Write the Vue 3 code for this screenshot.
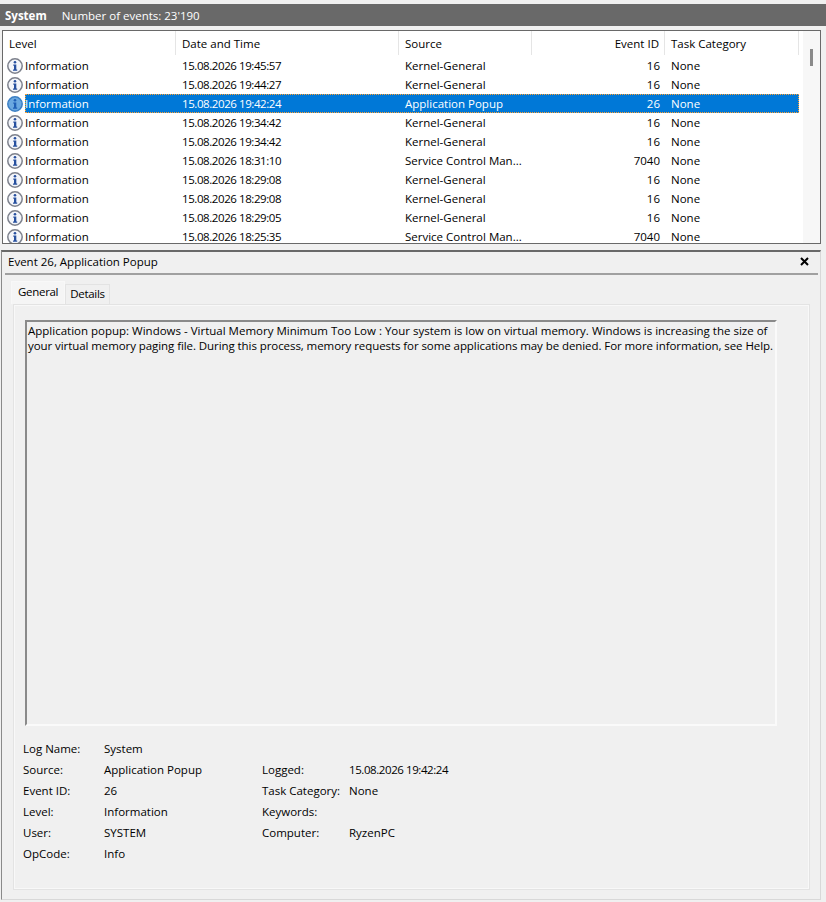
<template>
  <div class="viewer">
    <div class="log-bar">
      <strong>System</strong>
      <span>Number of events: 23'190</span>
    </div>

    <div class="list-panel">
      <div class="list-main">
        <div class="list-head">
          <div v-for="col in columns" :key="col.name" class="head-cell" :class="col.cls">{{ col.name }}</div>
        </div>
        <div class="rows">
          <div v-for="(ev, i) in events" :key="i" class="row" :class="{ selected: i === 2 }">
            <div class="cell level">
              <svg class="info-icon" width="16" height="16" viewBox="0 0 16 16">
                <circle cx="8" cy="8" r="7.2" :fill="i === 2 ? '#6aa8e0' : '#f3f5fa'" :stroke="i === 2 ? '#3b7fc4' : '#7d818c'" stroke-width="1.5" />
                <circle cx="8" cy="4.2" r="1.3" :fill="i === 2 ? '#1f5fb5' : '#27509f'" />
                <path d="M6.3 6.5h3v5h.9v1.3H6v-1.3h1V7.8h-.7z" :fill="i === 2 ? '#1f5fb5' : '#27509f'" />
              </svg>
              <span class="level-text">Information</span>
            </div>
            <div class="cell date">{{ ev.date }}</div>
            <div class="cell source">{{ ev.source }}</div>
            <div class="cell event-id">{{ ev.id }}</div>
            <div class="cell task">None</div>
          </div>
        </div>
      </div>
      <div class="scroll-track"><div class="scroll-thumb"></div></div>
    </div>

    <div class="detail-panel">
      <div class="detail-title">
        <span>Event 26, Application Popup</span>
        <svg class="close-icon" width="9" height="9" viewBox="0 0 9 9">
          <path d="M1 1l7 7M8 1l-7 7" stroke="#000" stroke-width="2" fill="none" />
        </svg>
      </div>

      <div class="tabs">
        <div class="tab active">General</div>
        <div class="tab">Details</div>
      </div>

      <div class="tab-body">
        <div class="message">
          <div class="line-one">Application popup: Windows - Virtual Memory Minimum Too Low : Your system is low on virtual memory. Windows is increasing the size of</div>
          <div class="line-two">your virtual memory paging file. During this process, memory requests for some applications may be denied. For more information, see Help.</div>
        </div>

        <div class="fields">
          <template v-for="(f, i) in fields" :key="i">
            <div>{{ f[0] }}</div>
            <div>{{ f[1] }}</div>
            <div>{{ f[2] }}</div>
            <div :class="{ 'logged-date': i === 1 }">{{ f[3] }}</div>
          </template>
        </div>
      </div>
    </div>
  </div>
</template>

<script setup>
const columns = [
  { name: 'Level', cls: 'level-col' },
  { name: 'Date and Time', cls: 'date-col' },
  { name: 'Source', cls: 'source-col' },
  { name: 'Event ID', cls: 'id-col' },
  { name: 'Task Category', cls: 'task-col' }
]

const kernel = 'Kernel-General'
const scm = 'Service Control Man...'

const events = [
  { date: '15.08.2026 19:45:57', source: kernel, id: 16 },
  { date: '15.08.2026 19:44:27', source: kernel, id: 16 },
  { date: '15.08.2026 19:42:24', source: 'Application Popup', id: 26 },
  { date: '15.08.2026 19:34:42', source: kernel, id: 16 },
  { date: '15.08.2026 19:34:42', source: kernel, id: 16 },
  { date: '15.08.2026 18:31:10', source: scm, id: 7040 },
  { date: '15.08.2026 18:29:08', source: kernel, id: 16 },
  { date: '15.08.2026 18:29:08', source: kernel, id: 16 },
  { date: '15.08.2026 18:29:05', source: kernel, id: 16 },
  { date: '15.08.2026 18:25:35', source: scm, id: 7040 }
]

const fields = [
  ['Log Name:', 'System', '', ''],
  ['Source:', 'Application Popup', 'Logged:', '15.08.2026 19:42:24'],
  ['Event ID:', '26', 'Task Category:', 'None'],
  ['Level:', 'Information', 'Keywords:', ''],
  ['User:', 'SYSTEM', 'Computer:', 'RyzenPC'],
  ['OpCode:', 'Info', '', '']
]
</script>

<style>
html,
body {
  margin: 0;
  background: #f0f0f0;
}
</style>

<style scoped>
.viewer {
  width: 826px;
  height: 902px;
  overflow: hidden;
  background: #f0f0f0;
  font-family: "Open Sans", "Noto Sans", sans-serif;
  font-size: 11.5px;
  color: #000;
  padding-top: 4px;
  box-sizing: border-box;
}

.log-bar {
  height: 22px;
  background: #696969;
  color: #fff;
  display: flex;
  align-items: center;
  gap: 15px;
  padding-left: 5px;
}

.log-bar strong {
  font-weight: 700;
}

.list-panel {
  margin: 4px 5px 0 2px;
  height: 214px;
  border: 1px solid #696969;
  background: #fff;
  display: flex;
  overflow: hidden;
  box-sizing: border-box;
}

.list-main {
  width: 800px;
  flex: none;
}

.list-head {
  display: grid;
  grid-template-columns: 173px 223px 133px 133px 134px;
  height: 24px;
}

.head-cell {
  padding: 5px 0 0 6px;
  border-right: 1px solid #e5e5e5;
}

.id-col {
  text-align: right;
  padding: 5px 5px 0 0;
}

.rows {
  margin-top: 1px;
}

.row {
  display: grid;
  grid-template-columns: 173px 223px 133px 133px 134px;
  height: 19px;
  line-height: 18px;
  color: #000;
  box-sizing: border-box;
}

.cell {
  white-space: nowrap;
  overflow: hidden;
  padding-top: 1px;
}

.level {
  display: flex;
  align-items: center;
  padding: 0 0 0 4px;
}

.info-icon {
  flex: none;
  margin-right: 2px;
}

.date,
.source,
.task {
  padding-left: 6px;
}

.date,
.logged-date {
  letter-spacing: -0.42px;
}

.event-id {
  text-align: right;
  padding-right: 5px;
}

.row.selected {
  background: linear-gradient(#0078d7, #0078d7) no-repeat 22px 0 / 774px 100%;
  color: #fff;
  position: relative;
}

.row.selected::after {
  content: "";
  position: absolute;
  left: 22px;
  width: 774px;
  top: 0;
  bottom: 0;
  box-sizing: border-box;
  border: 1px dotted #ffa030;
}

.scroll-track {
  flex: 1;
  background: #f7f7f7;
  position: relative;
}

.scroll-thumb {
  position: absolute;
  left: 7px;
  top: 18px;
  width: 3px;
  height: 17px;
  background: #8a8a8a;
}

.detail-panel {
  margin: 6px 5px 0 1px;
  height: 650px;
  border-top: 2px solid #696969;
  border-left: 1px solid #8a8a8a;
  border-right: 1px solid #d8d8d8;
  border-bottom: 1px solid #d8d8d8;
  box-sizing: border-box;
  background: #f0f0f0;
}

.detail-title {
  display: flex;
  justify-content: space-between;
  align-items: center;
  height: 23px;
  margin: 0 2px 0 3px;
  padding: 0 9px 3px 3px;
  border-bottom: 2px solid #a0a0a0;
  box-sizing: border-box;
}

.close-icon {
  margin-top: 1px;
}

.tabs {
  display: flex;
  align-items: flex-end;
  height: 29px;
  padding-left: 9px;
}

.tab {
  height: 19px;
  line-height: 17px;
  padding: 0 4px;
  background: #f0f0f0;
  border: 1px solid #e3e3e3;
  border-bottom: none;
  letter-spacing: -0.3px;
}

.tab.active {
  height: 22px;
  line-height: 20px;
  background: #f5f5f5;
  padding: 0 6px;
  border-color: #f8f8f8;
}

.tab-body {
  margin: 0 10px 0 11px;
  height: 586px;
  border: 1px solid #e3e3e3;
  box-shadow: inset 0 0 0 1px #f8f8f8;
  box-sizing: border-box;
  padding: 15px 32px 0 11px;
  background: #f0f0f0;
}

.message {
  height: 406px;
  border-top: 2px solid #8a8a8a;
  border-left: 2px solid #8a8a8a;
  border-right: 2px solid #fafafa;
  border-bottom: 2px solid #fafafa;
  box-sizing: border-box;
  padding: 1px 0 0 1px;
  line-height: 15px;
  white-space: nowrap;
  overflow: hidden;
}

.line-two {
  letter-spacing: -0.075px;
}

.fields {
  margin: 12px 0 0 -2px;
  display: grid;
  grid-template-columns: 81px 158px 87px 1fr;
  grid-auto-rows: 21px;
  line-height: 21px;
}
</style>
